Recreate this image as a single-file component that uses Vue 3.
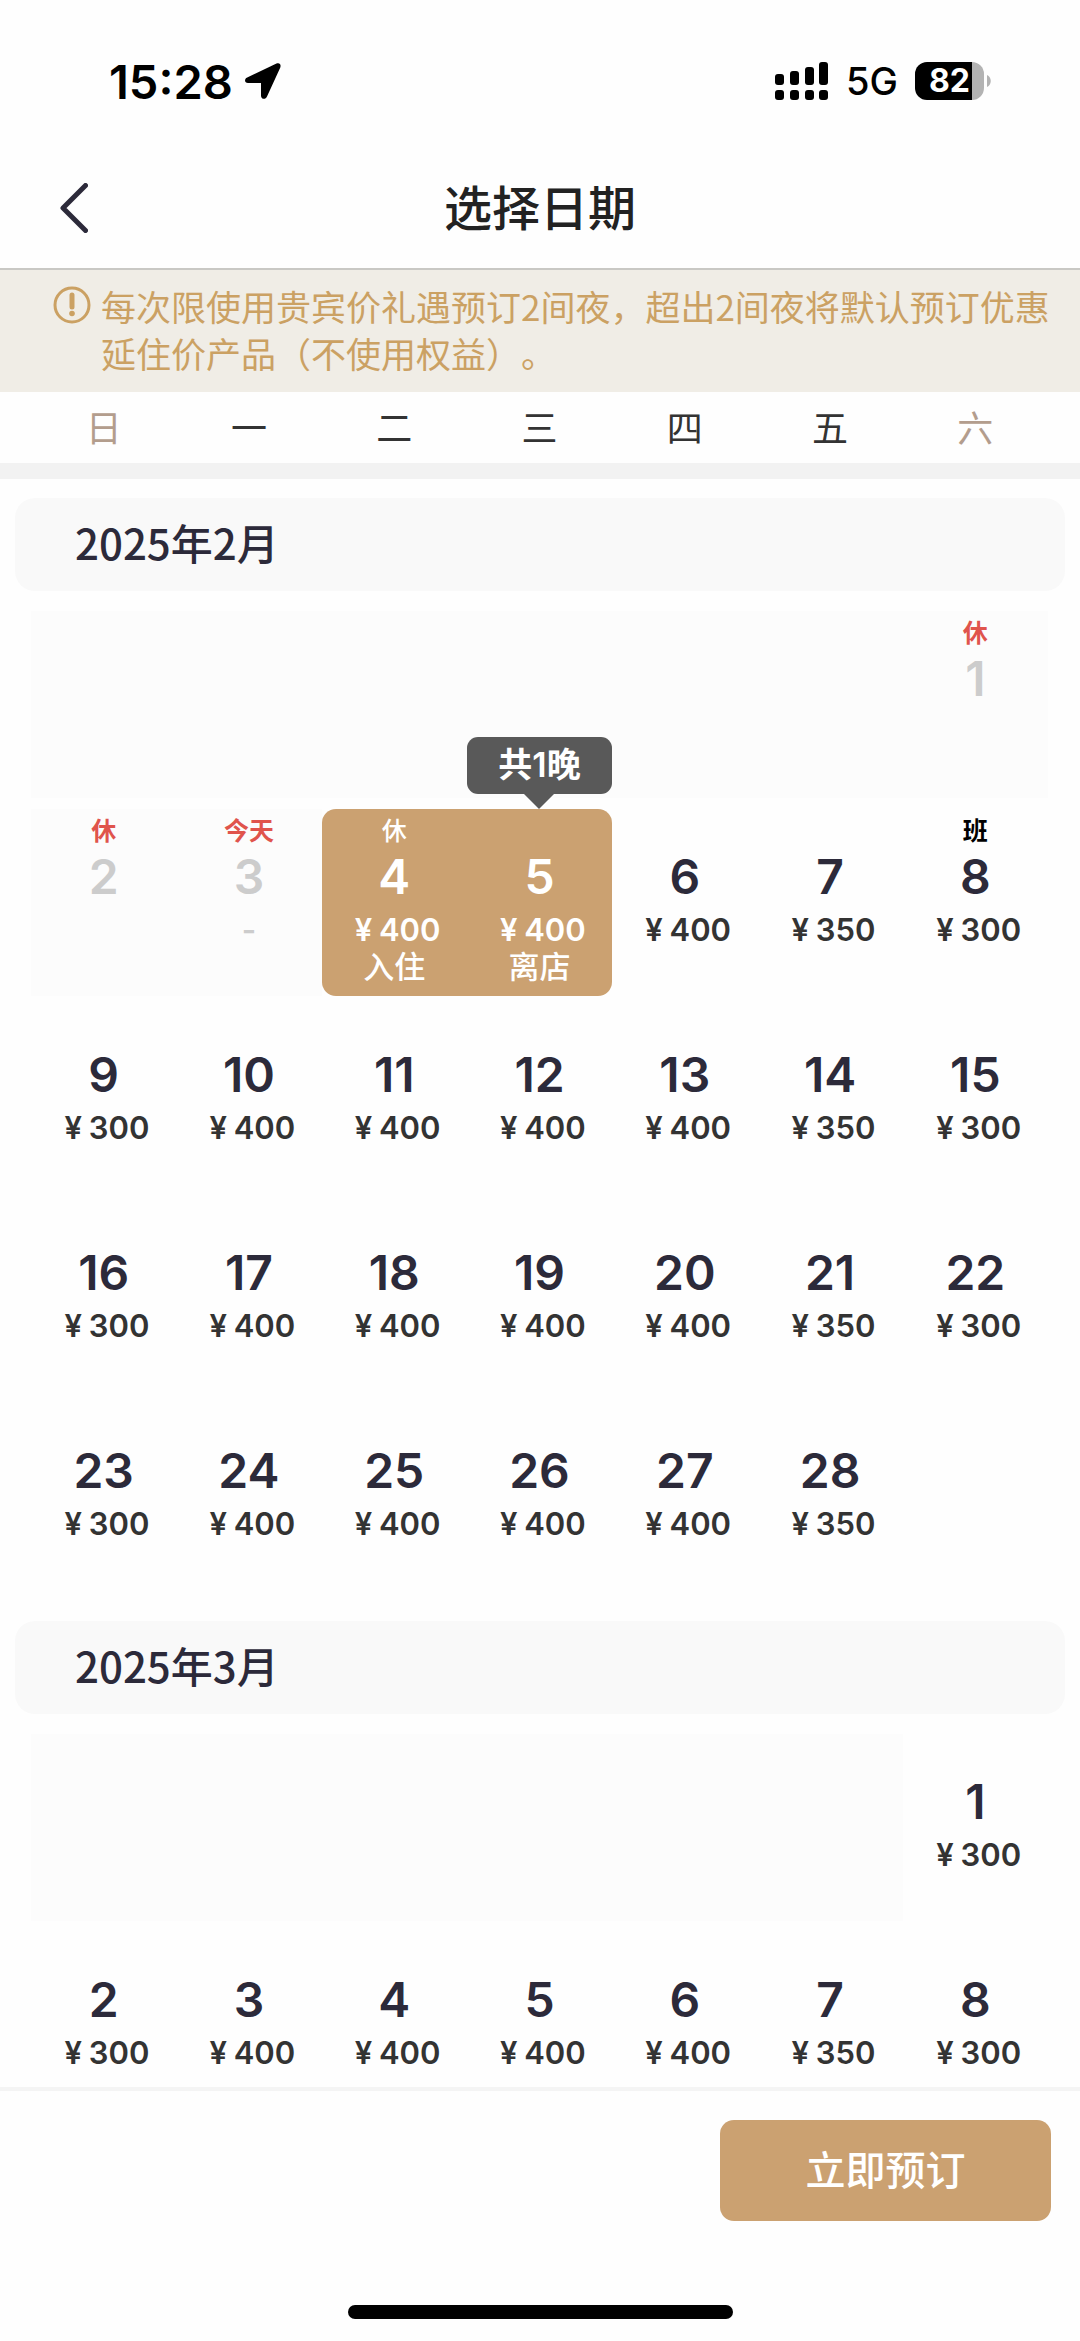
<template>
  <div class="page">
    <div class="status-bar">
      <div class="status-left">
        <span class="time">15:28</span>
        <svg class="location" viewBox="0 0 36 36" aria-hidden="true">
          <path d="M2.200 14.500 31.500.6C34.500-.5 36.300 1.500 35.300 4.400L22 33.500C20.600 37 16 36.400 16 32.700V20H3C-.6 20-1 16 2.200 14.500Z" />
        </svg>
      </div>
      <div class="status-right">
        <svg class="signal" viewBox="0 0 54 38" aria-hidden="true">
          <rect x="0" y="12" width="9" height="11" rx="3" />
          <rect x="15" y="9" width="9" height="14" rx="3" />
          <rect x="30" y="5" width="9" height="18" rx="3" />
          <rect x="44" y="0" width="9" height="23" rx="3" />
          <rect v-for="x in [0, 15, 30, 44]" :key="x" :x="x" y="28" width="9" height="10" rx="3" />
        </svg>
        <span class="network">5G</span>
        <div class="battery">
          <span class="battery-body">82</span>
          <svg class="battery-tip" viewBox="0 0 4 12" aria-hidden="true">
            <path d="M0 0C5 2 5 10 0 12Z" />
          </svg>
        </div>
      </div>
    </div>

    <header class="header">
      <button class="back" type="button" aria-label="返回">
        <svg viewBox="0 0 28 50" aria-hidden="true">
          <path d="M25.500 2.500 3 25 25.500 47.500" />
        </svg>
      </button>
      <h1 class="title">选择日期</h1>
    </header>

    <div class="notice">
      <svg class="notice-icon" viewBox="0 0 38 38" aria-hidden="true">
        <circle cx="19" cy="19" r="17" />
        <path d="M19 9v12" />
        <circle class="dot" cx="19" cy="27.500" r="2.800" />
      </svg>
      <p class="notice-text">每次限使用贵宾价礼遇预订2间夜，超出2间夜将默认预订优惠延住价产品（不使用权益）。</p>
    </div>

    <div class="weekdays">
      <span v-for="w in weekdays" :key="w" class="weekday">{{ w }}</span>
    </div>

    <main class="calendar">
      <section v-for="month in months" :key="month.title" class="month">
        <h2 class="month-title">{{ month.title }}</h2>
        <div class="days">
          <div v-for="n in month.offset" :key="'e' + n" class="cell off"></div>
          <button
            v-for="d in month.days"
            :key="d.day"
            type="button"
            class="cell"
            :class="{ off: d.disabled, start: d.label === '入住', end: d.label === '离店' }"
            :disabled="d.disabled"
          >
            <span class="tag" :class="{ work: d.tag === '班' }">{{ d.tag }}</span>
            <span class="day">{{ d.day }}</span>
            <span class="price">
              <template v-if="d.price"><span class="yen">¥</span>{{ d.price }}</template>
              <template v-else-if="d.empty">-</template>
            </span>
            <span v-if="d.label" class="label">{{ d.label }}</span>
            <span v-if="d.tip" class="tip">{{ d.tip }}</span>
          </button>
        </div>
      </section>
    </main>

    <footer class="footer">
      <button class="submit" type="button">立即预订</button>
      <div class="home-indicator"></div>
    </footer>
  </div>
</template>

<script setup>
const weekdays = ['日', '一', '二', '三', '四', '五', '六']

// 周日到周六的房价
const weekPrices = [300, 400, 400, 400, 400, 350, 300]

// 特殊日期
const special = {
  1: { tag: '休', disabled: true, price: 0 },
  2: { tag: '休', disabled: true, price: 0 },
  3: { tag: '今天', disabled: true, price: 0, empty: true },
  4: { tag: '休', label: '入住' },
  5: { label: '离店', tip: '共1晚' },
  8: { tag: '班' }
}

const buildDays = (count, offset, extra = {}) =>
  Array.from({ length: count }, (_, i) => ({
    day: i + 1,
    price: weekPrices[(i + offset) % 7],
    ...extra[i + 1]
  }))

const months = [
  { title: '2025年2月', offset: 6, days: buildDays(28, 6, special) },
  { title: '2025年3月', offset: 6, days: buildDays(8, 6) }
]
</script>

<style>
body {
  margin: 0;
  background: #fefefe;
}
</style>

<style scoped>
.page {
  display: flex;
  flex-direction: column;
  height: 100vh;
  background: #fefefe;
  color: #2c2a3a;
  font-family: Inter, "Noto Sans CJK SC", sans-serif;
}

button {
  padding: 0;
  border: 0;
  background: none;
  color: inherit;
  font-family: inherit;
}

.status-bar {
  display: flex;
  justify-content: space-between;
  align-items: center;
  flex: none;
  height: 134px;
  padding: 14px 89px 0 109px;
  color: #000;
}

.status-left,
.status-right,
.battery {
  display: flex;
  align-items: center;
}

.status-left {
  gap: 12px;
}

.time {
  font-size: 47px;
  font-weight: 600;
}

.location {
  width: 36px;
  height: 36px;
}

.status-right {
  gap: 17px;
}

.signal {
  width: 54px;
  height: 38px;
}

.network {
  font-size: 38px;
  font-weight: 500;
}

.battery {
  gap: 3px;
}

.battery-body {
  box-sizing: border-box;
  width: 69px;
  height: 38px;
  padding-left: 14px;
  border-radius: 12px;
  background: linear-gradient(90deg, #000 57px, #b3b3b3 57px);
  color: #fff;
  font-size: 32px;
  font-weight: 700;
  line-height: 38px;
}

.battery-tip {
  width: 4px;
  height: 12px;
  fill: #b3b3b3;
}

.header {
  display: grid;
  grid-template-columns: 100px 1fr 100px;
  align-items: center;
  flex: none;
  height: 120px;
  border-bottom: 2px solid #c9c8c4;
}

.back {
  display: flex;
  padding-left: 60px;
}

.back svg {
  width: 28px;
  height: 50px;
  fill: none;
  stroke: #2c2a3a;
  stroke-width: 5;
  stroke-linecap: round;
  stroke-linejoin: round;
}

.title {
  margin: 0;
  padding-bottom: 6px;
  color: #222;
  font-size: 48px;
  font-weight: 500;
  text-align: center;
}

.notice {
  display: flex;
  gap: 10px;
  flex: none;
  padding: 12px 28px 16px 53px;
  background: #f0ede6;
  color: #cba163;
}

.notice-icon {
  flex: none;
  width: 38px;
  height: 38px;
  margin-top: 4px;
  fill: none;
  stroke: currentColor;
  stroke-width: 3;
  stroke-linecap: round;
}

.notice-icon path {
  stroke-width: 5;
}

.notice-icon .dot {
  fill: currentColor;
  stroke: none;
}

.notice-text {
  margin: 0;
  font-family: "Noto Sans CJK SC", sans-serif;
  font-size: 35px;
  line-height: 47px;
  text-spacing-trim: space-all;
}

.weekdays {
  display: grid;
  grid-template-columns: repeat(7, 1fr);
  flex: none;
  padding: 4px 32px 0 31px;
  border-bottom: 16px solid #f2f2f2;
  color: #333;
  font-size: 36px;
  line-height: 67px;
  text-align: center;
}

.weekday:first-child,
.weekday:last-child {
  color: #b39d8d;
}

.calendar {
  flex: 1;
  min-height: 0;
  overflow: hidden;
}

.month {
  padding: 19px 0 12px;
}

.month-title {
  margin: 0 15px 20px;
  padding: 0 0 6px 60px;
  border-radius: 20px;
  background: #f9f9f9;
  font-family: "Noto Sans CJK SC", sans-serif;
  font-size: 42px;
  font-weight: 500;
  line-height: 87px;
}

.days {
  display: grid;
  grid-template-columns: repeat(7, 1fr);
  row-gap: 11px;
  padding: 0 32px 0 31px;
}

.cell {
  position: relative;
  display: flex;
  flex-direction: column;
  align-items: center;
  box-sizing: border-box;
  height: 187px;
  padding-top: 9px;
}

.off {
  background: #fcfcfc;
  color: #ccc;
}

.tag {
  height: 26px;
  color: #e0544c;
  font-size: 25px;
  font-weight: 700;
  line-height: 26px;
}

.tag.work {
  color: #000;
}

.day {
  margin: 7px 0 9px;
  font-size: 48px;
  font-weight: 600;
  line-height: 52px;
}

.price {
  height: 36px;
  color: #333;
  font-size: 31px;
  font-weight: 600;
  line-height: 36px;
}

.off .price {
  color: inherit;
}

.yen {
  display: inline-block;
  width: 31px;
  text-align: center;
}

.label {
  font-size: 31px;
  font-weight: 500;
  line-height: 38px;
}

.start,
.end {
  background: #cba171;
  color: #fff;
}

.start {
  border-radius: 14px 0 0 14px;
}

.end {
  border-radius: 0 14px 14px 0;
}

.start .tag,
.start .price,
.end .price {
  color: #fff;
}

.start .tag {
  font-weight: 500;
}

.tip {
  position: absolute;
  right: 0;
  bottom: 100%;
  left: 0;
  margin-bottom: 15px;
  padding-bottom: 2px;
  border-radius: 11px;
  background: #595959;
  font-size: 34px;
  font-weight: 600;
  line-height: 55px;
}

.tip::after {
  content: "";
  position: absolute;
  top: 100%;
  left: 50%;
  margin-left: -15px;
  border: 15px solid transparent;
  border-top-color: #595959;
  border-bottom: 0;
}

.footer {
  display: flex;
  flex-direction: column;
  flex: none;
  padding: 29px 29px 22px;
  border-top: 4px solid #f4f4f4;
}

.submit {
  align-self: flex-end;
  width: 331px;
  height: 101px;
  padding-bottom: 6px;
  border-radius: 14px;
  background: #cba171;
  color: #fff;
  font-size: 40px;
  font-weight: 500;
}

.home-indicator {
  align-self: center;
  width: 385px;
  height: 14px;
  margin-top: 84px;
  border-radius: 7px;
  background: #000;
}
</style>
